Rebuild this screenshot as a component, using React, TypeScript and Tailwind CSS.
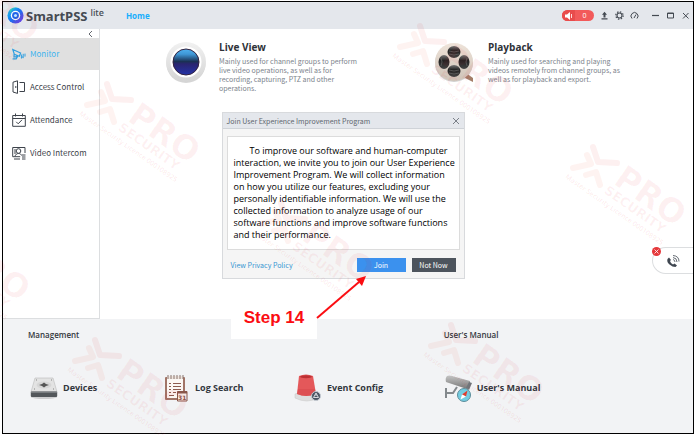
import { useState } from "react";
import type { ReactNode } from "react";

const watermarks = [
  [-52, -18],
  [109, 103],
  [422, 45],
  [595, 166],
  [283, 222],
  [-61, 241],
  [97, 359],
  [453, 344],
];

function Watermark() {
  return (
    <svg
      aria-hidden="true"
      className="pointer-events-none absolute inset-0 z-20 h-full w-full overflow-hidden"
    >
      {watermarks.map(([x, y]) => (
        <g key={`${x},${y}`} transform={`translate(${x} ${y})`}>
          <g fill="none" strokeWidth="6" strokeLinecap="round" strokeLinejoin="round">
            <path d="M-2-19 3-4 22-3" stroke="#dc2626" strokeOpacity=".07" />
            <path d="M-22 2-4-2-8-11" stroke="#ef5a3c" strokeOpacity=".07" />
            <path d="M5 19 1 6-9 9" stroke="#ef5a3c" strokeOpacity=".07" />
          </g>
          <g transform="rotate(35)" fill="#e11d2e" fillOpacity=".06">
            <text x="24" y="4" className="font-['DejaVu_Sans'] text-[33px] font-bold">
              PRO
            </text>
            <text x="22" y="17" className="font-['DejaVu_Sans'] text-[13px] font-bold">
              SECURITY
            </text>
            <text
              x="-18"
              y="27"
              fillOpacity=".09"
              className="font-['Open_Sans'] text-[7px] font-semibold"
            >
              Master Security Licence 000108925
            </text>
          </g>
        </g>
      ))}
    </svg>
  );
}

function Logo() {
  return (
    <svg viewBox="0 0 18 18" className="h-[17px] w-[17px]" aria-hidden="true">
      <defs>
        <linearGradient id="ring" x1="0" y1="0" x2="1" y2="1">
          <stop offset="0" stopColor="#18d5e8" />
          <stop offset=".5" stopColor="#1d6ff2" />
          <stop offset="1" stopColor="#7b35e8" />
        </linearGradient>
      </defs>
      <circle cx="9" cy="9" r="8.5" fill="url(#ring)" />
      <path d="M3 4a8 8 0 0 1 9-3 6 6 0 0 0-8 5z" fill="#25e2b4" />
      <circle cx="9" cy="9" r="5" fill="#fff" />
      <circle cx="9" cy="9" r="3.6" fill="#2463e8" />
      <circle cx="9" cy="9" r="1.6" fill="#bfe6ff" />
    </svg>
  );
}

function MonitorIcon() {
  return (
    <svg viewBox="0 0 14 14" className="h-[14px] w-[14px]" fill="none" stroke="#2f9fe0">
      <path d="M.8 2.5 8.6 6 7.4 9.2 2.3 7.2zM2 7.2v2.6h2.8V8.2M.6 11.8h3.6L5.8 9" strokeWidth="1.2" />
      <path d="M9.4 7.5v3.8M11.2 6.8v4.4M13 6.6v3M9.2 11.2l1.8-1.6" />
    </svg>
  );
}

function DoorIcon() {
  return (
    <svg viewBox="0 0 14 14" className="h-[14px] w-[14px]" fill="none" stroke="currentColor">
      <path d="M1 2.2 5.5.8v12.6L1 12zM7.5 2.5h5v9h-5M3.8 6v2" />
    </svg>
  );
}

function CalendarIcon() {
  return (
    <svg viewBox="0 0 14 14" className="h-[14px] w-[14px]" fill="none" stroke="currentColor">
      <path d="M.7 2.5h12.6v10.8H.7zM.7 5.5h12.6M3.5.5v3M10.5.5v3M4.2 8.8l2 2 3.8-4" />
    </svg>
  );
}

function IntercomIcon() {
  return (
    <svg viewBox="0 0 14 14" className="h-[14px] w-[14px]" fill="none" stroke="currentColor">
      <path d="M13 7V1.5H.7v9.2h7.5M2 13h6" />
      <circle cx="6.5" cy="5" r="2.3" />
      <path d="M3 10.5c.3-2 1.8-3 3.5-3s2.7.8 3 2M10 9h3.5M10 11h3.5M10 13h3.5M3 3v5" />
    </svg>
  );
}

function LensIcon() {
  return (
    <svg viewBox="0 0 42 42" className="h-[42px] w-[42px] shrink-0" aria-hidden="true">
      <defs>
        <linearGradient id="rim" x1="0" y1="0" x2="0" y2="1">
          <stop offset="0" stopColor="#f1f1f1" />
          <stop offset="1" stopColor="#d4d4d4" />
        </linearGradient>
        <linearGradient id="lens" x1="0" y1="0" x2="0" y2="1">
          <stop offset="0" stopColor="#4fb0ee" />
          <stop offset=".2" stopColor="#3f97d6" />
          <stop offset=".48" stopColor="#1a3154" />
          <stop offset=".58" stopColor="#2a2470" />
          <stop offset="1" stopColor="#2433a8" />
        </linearGradient>
      </defs>
      <ellipse cx="21" cy="23" rx="19.5" ry="19" fill="#000" opacity=".16" />
      <circle cx="21" cy="21" r="20" fill="url(#rim)" />
      <circle cx="21" cy="21" r="15.5" fill="#fff" />
      <circle cx="21" cy="21" r="13" fill="url(#lens)" stroke="#33223f" />
    </svg>
  );
}

function ReelIcon() {
  return (
    <svg viewBox="0 0 42 42" className="h-[42px] w-[42px] shrink-0" aria-hidden="true">
      <defs>
        <linearGradient id="reel" x1="0" y1="0" x2="0" y2="1">
          <stop offset="0" stopColor="#eee3d9" />
          <stop offset="1" stopColor="#cfc3b8" />
        </linearGradient>
        <linearGradient id="hole" x1="0" y1="0" x2="0" y2="1">
          <stop offset="0" stopColor="#777" />
          <stop offset=".4" stopColor="#222" />
          <stop offset="1" stopColor="#444" />
        </linearGradient>
      </defs>
      <circle cx="20" cy="22" r="19" fill="#000" opacity=".18" />
      <path d="m32 32 7 5v4l-8-4z" fill="#a57e68" />
      <circle cx="20" cy="21" r="19" fill="url(#reel)" />
      <ellipse cx="20" cy="11" rx="6.5" ry="6" fill="url(#hole)" />
      <ellipse cx="20" cy="30" rx="6.5" ry="6" fill="url(#hole)" />
      <ellipse cx="10" cy="21" rx="5.5" ry="7" fill="url(#hole)" />
      <ellipse cx="30" cy="21" rx="5.5" ry="7" fill="url(#hole)" />
      <path
        d="M15 10q5 2 10 0M15 13q5 2 10 0M15 29q5 2 10 0M15 32q5 2 10 0M7 17q2 4 0 8M33 17q-2 4 0 8"
        stroke="#666"
        strokeWidth=".7"
        fill="none"
      />
    </svg>
  );
}

function DriveIcon() {
  return (
    <svg viewBox="0 0 28 28" className="h-7 w-7" aria-hidden="true">
      <ellipse cx="14" cy="23" rx="13" ry="2" fill="#000" opacity=".15" />
      <path d="M5 4h18l4 14H1z" fill="#e3e3e3" stroke="#bbb" strokeWidth=".6" />
      <rect x=".8" y="17.5" width="26.4" height="5.5" rx="1" fill="#53575b" />
      <path d="M1 18.2h26" stroke="#8b8e91" />
      <ellipse cx="14" cy="11" rx="7.5" ry="3.5" fill="#d6d6d6" />
      <path d="m9 11 3-1 2-1.5 2 1.5 3 1-3 1-2 1.5-2-1.5z" fill="#555" />
      <path d="M6 6h1M21 6h1M4 15h1M23 15h1" stroke="#888" />
    </svg>
  );
}

function LogIcon() {
  return (
    <svg viewBox="0 0 28 28" className="h-7 w-7" aria-hidden="true">
      <rect x="3" y="3" width="20" height="23" rx="1" fill="#a17467" />
      <path d="M5 5h16v19H5z" fill="#fbf7f4" />
      <path d="M5 3.5h16" stroke="#efe5df" strokeWidth="3" />
      <path d="M6 1v4M9 1v4M12 1v4M15 1v4M18 1v4M21 1v4" stroke="#8a7770" />
      <path
        d="M7 9.5h2M11 9.5h8M7 12.5h2M11 12.5h8M7 15.5h2M11 15.5h8M7 18.5h2M11 18.5h3M7 21.5h5"
        stroke="#8c5b4f"
        strokeWidth="1.2"
      />
      <path d="M15.5 17.5H25V27h-9.5z" fill="#f7ece7" stroke="#89574a" />
      <path d="M15.5 18.5H25" stroke="#89574a" strokeWidth="2" />
      <text x="16" y="26" fill="#89574a" className="font-['DejaVu_Sans'] text-[6px] font-bold">
        31
      </text>
    </svg>
  );
}

function AlarmIcon() {
  return (
    <svg viewBox="0 0 28 28" className="h-7 w-7" aria-hidden="true">
      <path d="M1 20q11-5 23 0v4q-11 6-23 0z" fill="#dedede" stroke="#c4c4c4" strokeWidth=".5" />
      <path d="M5 2q7-3 14 0l3 18q-10 4-19 0z" fill="#e4585a" />
      <path d="M4 15 3 20q9 4 19 0l-1-5z" fill="#d94a4d" opacity=".6" />
      <ellipse cx="12" cy="2.8" rx="6" ry="1.5" fill="#bd3034" />
      <circle cx="22" cy="22" r="4.5" fill="#4b5563" stroke="#c5cbd3" />
      <path d="m22 19 2.500 4.500h-5zM22 20v2" fill="none" stroke="#e5e7eb" strokeWidth=".9" />
    </svg>
  );
}

function ManualIcon() {
  return (
    <svg viewBox="0 0 28 28" className="h-7 w-7" aria-hidden="true">
      <defs>
        <linearGradient id="cam" x1="0" y1="0" x2="0" y2="1">
          <stop offset="0" stopColor="#c4c4c4" />
          <stop offset="1" stopColor="#777" />
        </linearGradient>
      </defs>
      <path d="M2 14v10M2 19h7l4-6" fill="none" stroke="#83888c" strokeWidth="2" />
      <path d="M3 2q2-1 5 0l18 5v3l-3 5L2 8q-1-4 1-6z" fill="url(#cam)" />
      <path d="m25 8 3 1-3 7-3-2z" fill="#70757a" />
      <circle cx="20" cy="21" r="6.5" fill="#74cde2" stroke="#5c8c9a" />
      <path d="m23.5 16.5-1.5 6-4-2z" fill="#e23c2f" />
      <path d="m16.5 25.5 1.5-5 4 2z" fill="#fff" />
    </svg>
  );
}

const menu = [
  { label: "Monitor", icon: <MonitorIcon /> },
  { label: "Access Control", icon: <DoorIcon /> },
  { label: "Attendance", icon: <CalendarIcon /> },
  { label: "Video Intercom", icon: <IntercomIcon /> },
];

const management = [
  { label: "Devices", icon: <DriveIcon /> },
  { label: "Log Search", icon: <LogIcon /> },
  { label: "Event Config", icon: <AlarmIcon /> },
];

function Header() {
  return (
    <header className="flex h-[27px] items-center bg-[#e4e7ec] pr-[3px] pl-1 text-[#444a52]">
      <Logo />
      <p className="ml-[2px] flex items-start font-['Noto_Sans',sans-serif] text-[13px] leading-4 font-bold">
        SmartPSS
        <span className="ml-[3px] text-[9px] leading-[10px] font-medium">lite</span>
      </p>
      <a href="#home" className="ml-[22px] text-[8px] leading-3 font-bold text-[#17aefc]">
        Home
      </a>
      <div className="ml-auto flex items-center gap-[6px]">
        <button
          aria-label="Alarms"
          className="flex h-[11px] w-[32px] items-center overflow-hidden rounded-full bg-[#f25a5a] text-[7px] leading-[11px] text-white"
        >
          <span className="flex h-full w-[13px] items-center justify-center bg-[#e84c4c]">
            <svg viewBox="0 0 9 8" className="h-2 w-[9px]" fill="#fff">
              <path d="M1 2.5h2L6 0v8L3 5.5H1z" />
              <path d="M7.5 2v4" stroke="#fff" strokeWidth=".8" />
            </svg>
          </span>
          <span className="flex-1 text-center">0</span>
        </button>
        <button aria-label="Upload">
          <svg viewBox="0 0 9 9" className="h-[9px] w-[9px]" fill="currentColor">
            <path d="M4.5.8 7 3.8H5.5v2.7h-2V3.8H2zM1.5 7.2h6v1.3h-6z" />
          </svg>
        </button>
        <button aria-label="Settings">
          <svg viewBox="0 0 9 9" className="h-[9px] w-[9px]" fill="none" stroke="currentColor">
            <circle cx="4.5" cy="4.5" r="2.5" strokeWidth="1.1" />
            <circle cx="4.5" cy="4.5" r="3.7" strokeWidth="1.2" strokeDasharray="1.45" />
          </svg>
        </button>
        <button aria-label="System status">
          <svg viewBox="0 0 9 9" className="h-[9px] w-[9px]" fill="none" stroke="currentColor">
            <path d="M2 7.500A3.500 3.500 0 1 1 7 7.500M4 7 6 3.500" />
          </svg>
        </button>
        <button aria-label="Minimize" className="ml-[6px]">
          <svg viewBox="0 0 9 9" className="h-[9px] w-[9px]" fill="none" stroke="currentColor">
            <path d="M1 4.500h7" strokeWidth="1.200" />
          </svg>
        </button>
        <button aria-label="Maximize">
          <svg viewBox="0 0 9 9" className="h-[9px] w-[9px]" fill="none" stroke="currentColor">
            <path d="M1.500 2h6v5h-6zM1.500 2.500h6" />
          </svg>
        </button>
        <button aria-label="Close">
          <svg viewBox="0 0 9 9" className="h-[9px] w-[9px]" fill="none" stroke="currentColor">
            <path d="m2 2 5.500 5.500M7.500 2 2 7.500" />
          </svg>
        </button>
      </div>
    </header>
  );
}

function Sidebar() {
  return (
    <nav className="w-[97px] shrink-0 border-r border-b border-[#dcdee0] text-[#3d434b]">
      <button aria-label="Collapse menu" className="ml-auto flex h-[9px] w-3 items-center">
        <svg viewBox="0 0 6 8" className="h-2 w-[6px]" fill="none" stroke="currentColor">
          <path d="M5 1 2 4l3 3" strokeWidth=".8" />
        </svg>
      </button>
      {menu.map(({ label, icon }, i) => (
        <a
          key={label}
          href={"#" + label.toLowerCase().replace(" ", "-")}
          className={
            i === 0
              ? "flex h-8 items-center gap-1 bg-[#e0e0e0] pl-[9px] text-[#41b4ee]"
              : "flex h-[33px] items-center gap-1 pl-[9px]"
          }
        >
          {icon}
          <span className="font-['Noto_Sans_CJK_SC',sans-serif] text-[8px] leading-3">{label}</span>
        </a>
      ))}
    </nav>
  );
}

function Feature({ icon, title, children }: { icon: ReactNode; title: string; children: ReactNode }) {
  return (
    <article className="flex w-[204px] items-start gap-3">
      {icon}
      <div>
        <h2 className="text-[10px] leading-3 font-bold text-[#2e3238]">{title}</h2>
        <p className="mt-1 font-['Noto_Sans_CJK_SC',sans-serif] text-[7px] leading-[9px] whitespace-nowrap text-[#7c838c]">
          {children}
        </p>
      </div>
    </article>
  );
}

function ImprovementDialog({ onClose }: { onClose: () => void }) {
  return (
    <section
      role="dialog"
      aria-labelledby="dialog-title"
      className="w-[243px] border border-[#d8dadd] bg-[#f5f5f5] font-['Noto_Sans_CJK_SC',sans-serif]"
    >
      <div className="flex h-4 items-center justify-between border-b border-[#cfd3d8] bg-[#e4e7ec] px-1 text-[#60666e]">
        <h2 id="dialog-title" className="text-[7px] leading-3">
          Join User Experience Improvement Program
        </h2>
        <button aria-label="Close dialog" onClick={onClose}>
          <svg viewBox="0 0 8 8" className="h-2 w-2" fill="none" stroke="currentColor">
            <path d="m1 1 6 6M7 1 1 7" strokeWidth=".8" />
          </svg>
        </button>
      </div>
      <p className="mx-1 mt-[7px] border border-[#dcdcdc] bg-white px-[6px] py-2 indent-4 font-['Open_Sans',sans-serif] text-[9px] leading-3 whitespace-nowrap text-black">
        To improve our software and human-computer
        <br />
        interaction, we invite you to join our User Experience
        <br />
        Improvement Program. We will collect information
        <br />
        on how you utilize our features, excluding your
        <br />
        personally identifiable information. We will use the
        <br />
        collected information to analyze usage of our
        <br />
        software functions and improve software functions
        <br />
        and their performance.
      </p>
      <div className="flex items-center gap-[6px] px-2 pt-2 pb-[6px] text-[7px] leading-3">
        <a href="#privacy" className="mr-auto text-[#3796d2]">
          View Privacy Policy
        </a>
        <button className="h-[14px] w-[49px] bg-[#3b91ee] text-white" onClick={onClose}>
          Join
        </button>
        <button className="h-[14px] w-[44px] bg-[#4d545d] text-white" onClick={onClose}>
          Not Now
        </button>
      </div>
    </section>
  );
}

export default function App() {
  const [open, setOpen] = useState(true);

  return (
    <div className="relative flex min-h-screen flex-col bg-white pt-px pb-px pl-[2px] font-['Open_Sans',sans-serif]">
      <div className="flex flex-1 flex-col border border-black">
        <Header />
        <div className="flex flex-1">
          <Sidebar />
          <main className="relative flex flex-1 gap-[65px] bg-white pt-3 pl-[65px]">
            <Feature icon={<LensIcon />} title="Live View">
              Mainly used for channel groups to perform
              <br />
              live video operations, as well as for
              <br />
              recording, capturing, PTZ and other
              <br />
              operations.
            </Feature>
            <Feature icon={<ReelIcon />} title="Playback">
              Mainly used for searching and playing
              <br />
              videos remotely from channel groups, as
              <br />
              well as for playback and export.
            </Feature>
            <div className="absolute right-0 bottom-[45px] flex h-[27px] w-[41px] items-center justify-center rounded-l-full border border-r-0 border-[#dcdee0] bg-white">
              <button aria-label="Call" className="text-[#3f4650]">
                <svg viewBox="0 0 14 14" className="h-[14px] w-[14px]">
                  <path
                    d="M3 3.500 1.500 5q-1 3 2 5.500t6 2.500l1.500-1.500-2.500-2-1.500 1Q4.500 9 4 7l1-1z"
                    fill="currentColor"
                  />
                  <path
                    d="M7 5.500q2 .5 2 2.500M7 3.500q4 .5 4 4.500M7 1.500q6 .5 6 6"
                    fill="none"
                    stroke="currentColor"
                    strokeWidth=".8"
                  />
                </svg>
              </button>
              <button
                aria-label="Dismiss call"
                className="absolute -top-px -left-px flex h-[9px] w-[9px] items-center justify-center rounded-full bg-[#e5383b]"
              >
                <svg viewBox="0 0 5 5" className="h-[5px] w-[5px]" stroke="#fff" strokeWidth=".8">
                  <path d="m.5.5 4 4M4.500.5l-4 4" />
                </svg>
              </button>
            </div>
          </main>
        </div>
        <footer className="grid h-[114px] grid-cols-[5fr_3fr] bg-[#f2f3f5] pt-[10px] pl-[25px] text-[#33373d]">
          <section>
            <h2 className="text-[8px] leading-3 font-semibold">Management</h2>
            <div className="mt-[33px] flex">
              {management.map(({ label, icon }) => (
                <a
                  key={label}
                  href={"#" + label.toLowerCase().replace(" ", "-")}
                  className="flex w-[132px] items-center gap-[5px] pl-[2px] text-[9px] font-bold"
                >
                  {icon}
                  {label}
                </a>
              ))}
            </div>
          </section>
          <section>
            <h2 className="text-[8px] leading-3 font-semibold">User's Manual</h2>
            <a
              href="#manual"
              className="mt-[33px] flex items-center gap-[5px] text-[9px] font-bold"
            >
              <ManualIcon />
              User's Manual
            </a>
          </section>
        </footer>
      </div>
      {open && (
        <div className="absolute inset-x-0 top-[112px] z-10 flex justify-center pr-2">
          <ImprovementDialog onClose={() => setOpen(false)} />
        </div>
      )}
      <Watermark />
      <div className="absolute top-[297px] left-[231px] z-30 flex h-[42px] w-[86px] items-center justify-center bg-white font-['Liberation_Sans',sans-serif] text-[17px] font-bold text-[#fb0d12]">
        Step 14
      </div>
      <svg
        viewBox="0 0 52 46"
        className="pointer-events-none absolute top-[274px] left-[316px] z-30 h-[46px] w-[52px]"
        fill="#fb0d12"
      >
        <path d="M1 44 43 8" stroke="#fb0d12" strokeWidth="2" />
        <path d="M50 2 46 12 40 5z" />
      </svg>
    </div>
  );
}
